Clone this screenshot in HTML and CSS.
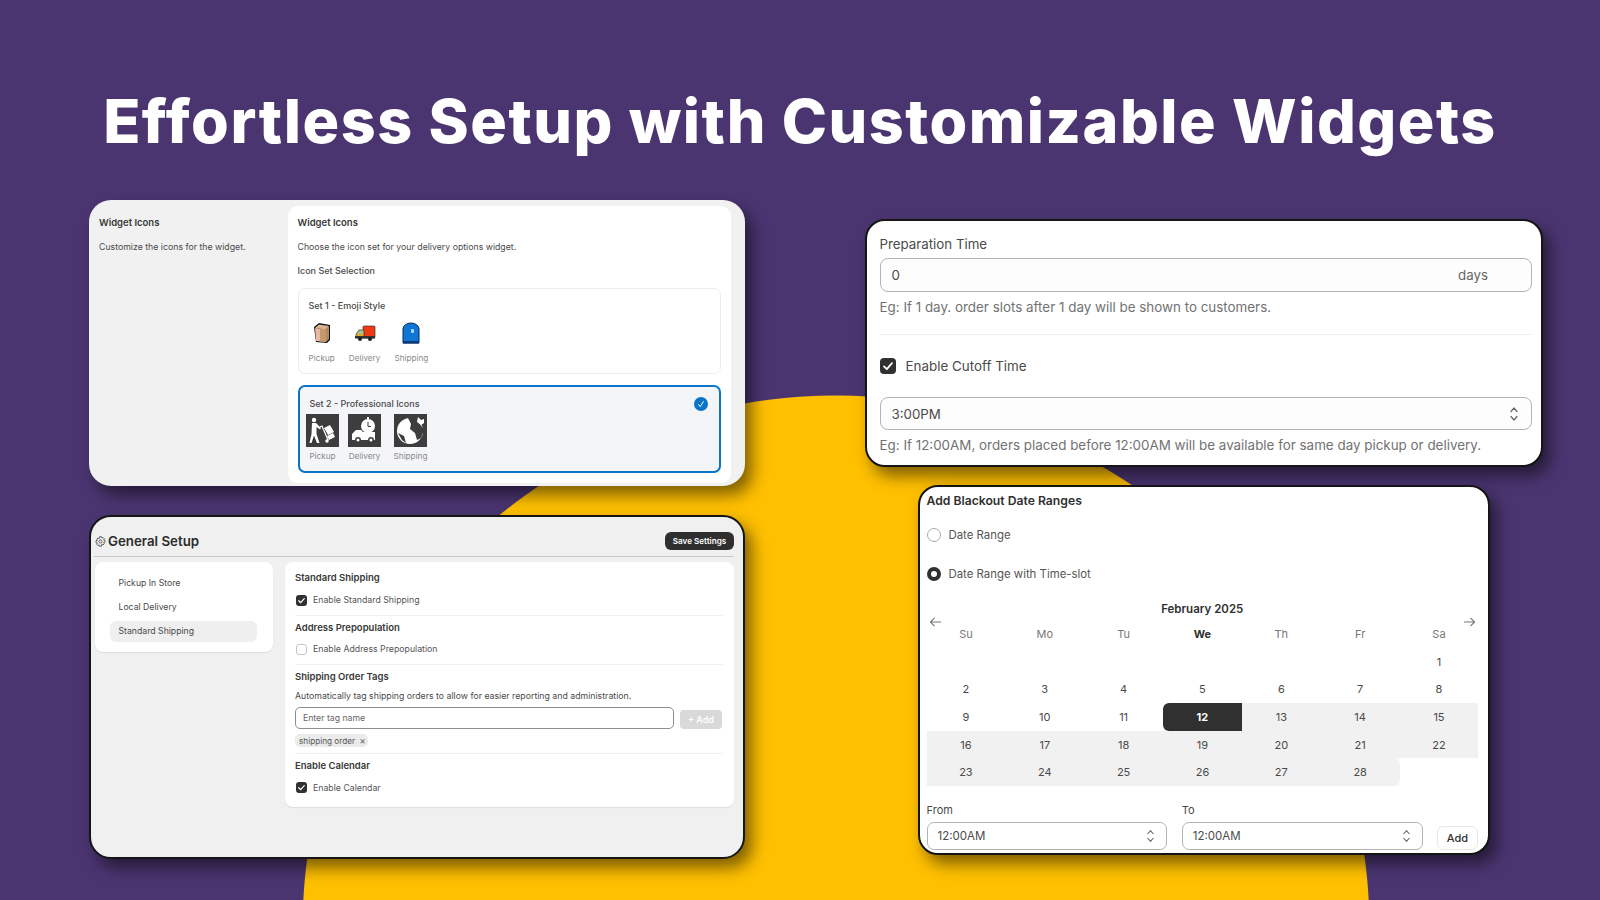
FILE: index.html
```html
<!DOCTYPE html>
<html lang="en">
<head>
<meta charset="utf-8">
<title>Effortless Setup with Customizable Widgets</title>
<link rel="stylesheet" href="styles.css">
</head>
<body>
<svg class="defs" width="0" height="0" aria-hidden="true">
  <symbol id="tick" viewBox="0 0 16 16"><path d="M4 8.4l2.8 2.8L12 5.2" fill="none" stroke="#fff" stroke-width="1.8" stroke-linecap="round" stroke-linejoin="round"/></symbol>
  <symbol id="updown" viewBox="0 0 10 18"><path d="M2 6.5L5 3l3 3.5M2 11.5L5 15l3-3.5" fill="none" stroke="#666" stroke-width="1.2" stroke-linecap="round" stroke-linejoin="round"/></symbol>
</svg>
<main class="page">
  <h1 class="headline">Effortless Setup with Customizable Widgets</h1>
  <div class="board">
    <div class="col col-left">
      <section class="card card-icons">
        <aside class="icons-side">
          <h3 class="t-strong">Widget Icons</h3>
          <p class="t-small side-desc">Customize the icons for the widget.</p>
        </aside>
        <div class="icons-panel">
          <h3 class="t-strong">Widget Icons</h3>
          <p class="t-small side-desc">Choose the icon set for your delivery options widget.</p>
          <p class="t-med set-label">Icon Set Selection</p>
          <div class="set set-one">
            <p class="t-med">Set 1 - Emoji Style</p>
            <div class="set-row">
              <div class="set-item">
                <svg class="emoji" viewBox="0 0 22 22"><path d="M3 5l5-4 11 2 0 15-3 3-11-1z" fill="#111"/><path d="M4 6l4-3.6L18 4l-3 3.6z" fill="#d9b48e"/><path d="M4 6l11 1.6L15 20 5 19z" fill="#e9b9a2"/><path d="M15 7.6L18 4v13l-3 3z" fill="#b08a62"/><path d="M9 7l6 .6V20l-6-.6z" fill="#c49a6c"/></svg>
                <span class="t-label">Pickup</span>
              </div>
              <div class="set-item">
                <svg class="emoji" viewBox="0 0 22 22"><rect x="9" y="4" width="12" height="12" rx="1" fill="#ef3a16" stroke="#222" stroke-width=".6"/><path d="M2 15v-3l3-4h5v8H3z" fill="#e3a92c" stroke="#222" stroke-width=".6"/><path d="M4 11.500l1.600-2.500H9v2.500z" fill="#7fd0c8"/><rect x="1" y="14" width="20" height="2.500" fill="#333"/><circle cx="6" cy="17" r="2" fill="#222"/><circle cx="16" cy="17" r="2" fill="#222"/></svg>
                <span class="t-label">Delivery</span>
              </div>
              <div class="set-item">
                <svg class="emoji" viewBox="0 0 22 22"><path d="M3 21V7a8 6 0 0 1 16 0v14z" fill="#0f76d6" stroke="#0a2a55" stroke-width="1"/><rect x="3" y="19" width="16" height="2.500" fill="#0a3d7e"/><rect x="11" y="7" width="3" height="4" rx="1" fill="#a9d6f5"/></svg>
                <span class="t-label">Shipping</span>
              </div>
            </div>
          </div>
          <div class="set set-two">
            <p class="t-med">Set 2 - Professional Icons</p>
            <svg class="set-badge" viewBox="0 0 14 14"><circle cx="7" cy="7" r="7" fill="#0a74c9"/><path d="M4.300 7.300L6.200 9.600 9.600 4.300" fill="none" stroke="#fff" stroke-width="1"/></svg>
            <div class="pro-row">
              <div class="pro-item">
                <svg class="pro" viewBox="0 0 33 33"><rect width="33" height="33" fill="#3d3d3d"/><circle cx="8" cy="6" r="2.200" fill="#fff"/><path d="M6 9h4l5 5-1 1.500-3.500-2.500V20l3 9h-2.500L8 21.500 5.500 29H3.500l2-9z" fill="#fff"/><path d="M14 13l2-1 6 14" fill="none" stroke="#fff" stroke-width="1.200"/><path d="M18 14l6-3 4 7-6 3z" fill="#fff"/><path d="M21 22l6-3 2 4-6 3z" fill="#fff"/><circle cx="21" cy="27" r="1.800" fill="#fff"/></svg>
                <span class="t-label">Pickup</span>
              </div>
              <div class="pro-item">
                <svg class="pro" viewBox="0 0 33 33"><rect width="33" height="33" fill="#3d3d3d"/><circle cx="20" cy="12" r="7" fill="#fff"/><rect x="19" y="3" width="2" height="2.500" fill="#fff"/><path d="M20 8v4.500h3" fill="none" stroke="#3d3d3d" stroke-width="1"/><path d="M4 24v-4l4-4h5l2 2h12v8H4z" fill="#fff"/><circle cx="10" cy="26" r="3" fill="#3d3d3d"/><circle cx="10" cy="26" r="1.500" fill="#fff"/><circle cx="23" cy="26" r="3" fill="#3d3d3d"/><circle cx="23" cy="26" r="1.500" fill="#fff"/></svg>
                <span class="t-label">Delivery</span>
              </div>
              <div class="pro-item">
                <svg class="pro" viewBox="0 0 33 33"><rect width="33" height="33" fill="#3d3d3d"/><circle cx="16" cy="17" r="13" fill="#fff"/><path d="M14 4l3 6-1 5 5 4 2 7 4-2 3-8-4-6 2-4-6-3zM4 19l6 3 2 7-4-3z" fill="#3d3d3d"/><path d="M24 3l3 3 3-1 0 4-3 2-4-3z" fill="#fff"/></svg>
                <span class="t-label">Shipping</span>
              </div>
            </div>
          </div>
        </div>
      </section>

      <section class="card card-dark card-setup">
        <header class="setup-head">
          <h2 class="setup-title">
            <svg class="gear" viewBox="0 0 12 12"><path d="M5 .8h2l.4 1.500 1.400-.7 1.300 1.300-.7 1.400 1.500.4v2l-1.500.4.700 1.400-1.300 1.300-1.400-.7L7 11.200H5l-.4-1.500-1.400.7-1.300-1.300.7-1.400-1.500-.4v-2l1.500-.4-.7-1.400 1.300-1.300 1.400.7z" fill="none" stroke="#555" stroke-width="1"/><circle cx="6" cy="6" r="1.700" fill="none" stroke="#555" stroke-width="1"/></svg>
            General Setup
          </h2>
          <button class="save-btn" type="button">Save Settings</button>
        </header>
        <div class="setup-body">
          <nav class="setup-nav">
            <a class="nav-item">Pickup In Store</a>
            <a class="nav-item">Local Delivery</a>
            <a class="nav-item nav-active">Standard Shipping</a>
          </nav>
          <div class="setup-main">
            <div class="sec sec-a">
              <h4 class="t-strong">Standard Shipping</h4>
              <label class="check-row row-a"><span class="cb cb-on"><svg viewBox="0 0 16 16"><use href="#tick"/></svg></span>Enable Standard Shipping</label>
            </div>
            <div class="sec sec-b">
              <h4 class="t-strong">Address Prepopulation</h4>
              <label class="check-row row-b"><span class="cb"></span>Enable Address Prepopulation</label>
            </div>
            <div class="sec sec-c">
              <h4 class="t-strong">Shipping Order Tags</h4>
              <p class="t-small tag-desc">Automatically tag shipping orders to allow for easier reporting and administration.</p>
              <div class="tag-input-row">
                <div class="tag-input">Enter tag name</div>
                <button class="tag-add" type="button">+ Add</button>
              </div>
              <span class="tag">shipping order <span class="tag-x">×</span></span>
            </div>
            <div class="sec sec-d">
              <h4 class="t-strong">Enable Calendar</h4>
              <label class="check-row row-a"><span class="cb cb-on"><svg viewBox="0 0 16 16"><use href="#tick"/></svg></span>Enable Calendar</label>
            </div>
          </div>
        </div>
      </section>
    </div>

    <div class="col col-right">
      <section class="card card-dark card-prep">
        <label class="prep-label">Preparation Time</label>
        <div class="field field-prep"><span>0</span><span class="field-unit">days</span></div>
        <p class="prep-help help-a">Eg: If 1 day. order slots after 1 day will be shown to customers.</p>
        <hr class="prep-rule">
        <label class="cutoff-row"><span class="cb cb-big"><svg viewBox="0 0 16 16"><use href="#tick"/></svg></span>Enable Cutoff Time</label>
        <div class="field field-cut"><span>3:00PM</span><svg class="updown-big" viewBox="0 0 10 18"><use href="#updown"/></svg></div>
        <p class="prep-help help-b">Eg: If 12:00AM, orders placed before 12:00AM will be available for same day pickup or delivery.</p>
      </section>

      <section class="card card-dark card-cal">
        <h3 class="cal-title">Add Blackout Date Ranges</h3>
        <label class="radio-row radio-first"><span class="radio"></span>Date Range</label>
        <label class="radio-row radio-second"><span class="radio radio-on"></span>Date Range with Time-slot</label>
        <div class="cal-month">February 2025</div>
        <div class="cal-nav">
          <svg viewBox="0 0 14 12"><path d="M13 6H1.500M6 1.500L1.500 6 6 10.500" fill="none" stroke="#777" stroke-width="1.200"/></svg>
          <svg viewBox="0 0 14 12"><path d="M1 6h11.500M8 1.500L12.500 6 8 10.500" fill="none" stroke="#777" stroke-width="1.200"/></svg>
        </div>
        <div class="cal-week">
          <span>Su</span><span>Mo</span><span>Tu</span><span class="today-head">We</span><span>Th</span><span>Fr</span><span>Sa</span>
        </div>
        <div class="cal-grid">
          <span></span><span></span><span></span><span></span><span></span><span></span><span>1</span>
          <span>2</span><span>3</span><span>4</span><span>5</span><span>6</span><span>7</span><span>8</span>
          <span>9</span><span>10</span><span>11</span><span class="sel">12</span><span class="rng">13</span><span class="rng">14</span><span class="rng">15</span>
          <span class="rng">16</span><span class="rng">17</span><span class="rng">18</span><span class="rng">19</span><span class="rng">20</span><span class="rng">21</span><span class="rng">22</span>
          <span class="rng">23</span><span class="rng">24</span><span class="rng">25</span><span class="rng">26</span><span class="rng">27</span><span class="rng rng-end">28</span><span></span>
        </div>
        <div class="time-row">
          <div class="time-field">
            <label class="time-label">From</label>
            <div class="time-select"><span>12:00AM</span><svg viewBox="0 0 10 18"><use href="#updown"/></svg></div>
          </div>
          <div class="time-field">
            <label class="time-label">To</label>
            <div class="time-select"><span>12:00AM</span><svg viewBox="0 0 10 18"><use href="#updown"/></svg></div>
          </div>
          <button class="time-add" type="button">Add</button>
        </div>
      </section>
    </div>
  </div>
</main>
</body>
</html>
```
FILE: styles.css
```css
* { box-sizing: border-box; }
html, body { margin: 0; padding: 0; }
body {
  width: 1600px;
  height: 900px;
  overflow: hidden;
  font-family: Inter, "Liberation Sans", sans-serif;
  color: #303030;
  background-color: #4b3571;
  background-image: radial-gradient(circle 534px at 836px 929px, #ffc000 99.8%, transparent 100%);
}
h1, h2, h3, h4, p { margin: 0; font-weight: 400; }
.defs { display: block; height: 0; }
.page { width: 1600px; height: 900px; }

.headline {
  height: 200px;
  padding-top: 84px;
  text-align: center;
  font-family: Inter, "Liberation Sans", sans-serif;
  font-weight: 800;
  font-size: 61px;
  line-height: 74px;
  letter-spacing: 1.500px;
  color: #fff;
  white-space: nowrap;
}

.board { display: flex; align-items: flex-start; padding-left: 89px; gap: 120px; }
.col { display: flex; flex-direction: column; }
.col-left { width: 656px; gap: 29px; }
.col-right { width: 678px; padding-top: 19px; gap: 18px; align-items: center; }

.card { box-shadow: 7px 9px 16px rgba(0, 0, 0, .5); }
.card-dark { border: 2px solid #151515; }

.t-strong { font-size: 9.500px; line-height: 12px; font-weight: 600; color: #383838; }
.t-small { font-size: 8.750px; line-height: 12px; color: #4a4a4a; }
.t-med { font-size: 9px; line-height: 12px; font-weight: 500; color: #4a4a4a; }
.t-label { font-size: 8.200px; line-height: 12px; color: #8a8a8a; }

/* Widget icons card */
.card-icons {
  display: flex;
  height: 286px;
  padding: 6px 14.500px 3px 0;
  border-radius: 22px;
  background: #f1f1f1;
}
.icons-side { width: 199px; padding: 11px 0 0 10px; }
.side-desc { margin-top: 12px; }
.icons-panel {
  flex: 1;
  padding: 11px 10px 0;
  border-radius: 10px;
  background: #fff;
}
.set-label { margin-top: 12px; }
.set { width: 423px; border-radius: 7px; }
.set-one {
  height: 86px;
  margin-top: 11px;
  padding: 11px 10px 0;
  border: 1px solid #ececec;
}
.set-row { display: flex; gap: 14px; margin-top: 10px; }
.set-item { display: flex; flex-direction: column; align-items: center; }
.emoji { width: 22px; height: 22px; margin-bottom: 8px; }
.set-two {
  position: relative;
  height: 88px;
  margin-top: 11px;
  padding: 11px 10px 0;
  border: 2px solid #0a74c9;
  background: #f4f5f8;
}
.set-badge { position: absolute; top: 10px; right: 11px; width: 14px; height: 14px; }
.pro-row { display: flex; gap: 9px; margin: 4px 0 0 -3.500px; }
.pro-item { display: flex; flex-direction: column; align-items: center; width: 33px; }
.pro-item:last-child { margin-left: 4px; }
.pro { width: 33px; height: 33px; margin-bottom: 2.500px; }

/* General setup card */
.card-setup {
  height: 344px;
  border-radius: 22px;
  background: #f0f0f0;
}
.setup-head {
  display: flex;
  align-items: center;
  justify-content: space-between;
  margin: 0 9px 0 3px;
  padding: 15px 0 6px 1px;
  border-bottom: 1.500px solid #c9c9c9;
}
.setup-title {
  display: flex;
  align-items: center;
  gap: 2px;
  font-size: 13.300px;
  line-height: 18px;
  font-weight: 600;
  color: #2c2c2c;
}
.gear { width: 11px; height: 11px; }
.save-btn {
  width: 69px;
  height: 18px;
  padding: 0;
  border: 0;
  border-radius: 6px;
  background: #2f2f2f;
  color: #fff;
  font: 600 8.100px/18px Inter, sans-serif;
}
.setup-body { display: flex; gap: 12.500px; padding: 5px 9px 0 3.500px; }
.setup-nav {
  display: flex;
  flex-direction: column;
  gap: 3px;
  width: 178px;
  height: 90px;
  padding: 10.500px 15.500px 0;
  border-radius: 8px;
  background: #fff;
  box-shadow: 0 1px 1px rgba(0, 0, 0, .08);
}
.nav-item {
  height: 21px;
  padding-left: 8.500px;
  border-radius: 6px;
  font-size: 8.700px;
  line-height: 21px;
  color: #4a4a4a;
}
.nav-active { background: #efefef; }
.setup-main {
  flex: 1;
  height: 245px;
  padding: 0 11px 0 10px;
  border-radius: 8px;
  background: #fff;
  box-shadow: 0 1px 1px rgba(0, 0, 0, .08);
}
.sec { border-bottom: 1px solid #f1f1f1; }
.sec-a { padding: 10px 0 9px; }
.sec-b { padding: 5.500px 0 9px; }
.sec-c { padding: 6px 0 5.500px; }
.sec-d { padding: 6px 0 0; border-bottom: 0; }
.check-row {
  display: flex;
  align-items: center;
  gap: 6px;
  padding-left: 1px;
  font-size: 8.750px;
  line-height: 12px;
  color: #555;
}
.row-a { margin-top: 10px; }
.row-b { margin-top: 9.500px; }
.cb {
  display: block;
  width: 11px;
  height: 11px;
  border: 1px solid #c4c4c4;
  border-radius: 3px;
  background: #fff;
}
.cb svg { display: block; width: 100%; height: 100%; }
.cb-on { border: 0; background: #303030; }
.tag-desc { margin-top: 6.500px; }
.tag-input-row { display: flex; align-items: flex-end; gap: 6px; margin-top: 5.500px; }
.tag-input {
  width: 379px;
  height: 22px;
  padding-left: 7px;
  border: 1px solid #8e8e8e;
  border-radius: 5px;
  font-size: 8.700px;
  line-height: 20px;
  color: #666;
}
.tag-add {
  width: 42px;
  height: 19px;
  padding: 0;
  border: 0;
  border-radius: 4px;
  background: #d9d9d9;
  color: #fff;
  font: 600 9px/19px Inter, sans-serif;
}
.tag {
  display: block;
  width: 73px;
  height: 13px;
  margin-top: 5px;
  padding-left: 4px;
  border-radius: 5px;
  background: #ebebeb;
  font-size: 8.200px;
  line-height: 13px;
  color: #555;
  white-space: nowrap;
}
.tag-x { margin-left: 2px; font-size: 10px; color: #666; }

/* Preparation card */
.card-prep {
  width: 678px;
  height: 248px;
  padding: 15px 9px 0 12.500px;
  border-radius: 20px;
  background: #fff;
}
.prep-label { display: block; font-size: 13.300px; line-height: 16px; color: #4a4a4a; }
.field {
  display: flex;
  align-items: center;
  justify-content: space-between;
  padding: 0 12px 0 11px;
  border: 1.500px solid #b3b3b3;
  border-radius: 8px;
  background: #fdfdfd;
  font-size: 13.300px;
  color: #4a4a4a;
}
.field-prep { height: 34px; margin-top: 6px; }
.field-unit { width: 31px; margin-right: 30px; color: #666; }
.prep-help { font-size: 13.400px; line-height: 16px; color: #727272; white-space: nowrap; }
.help-a { margin-top: 7px; }
.prep-rule { height: 1px; margin: 19px 0 0; border: 0; background: #eee; }
.cutoff-row {
  display: flex;
  align-items: center;
  gap: 10px;
  margin-top: 23px;
  font-size: 13.400px;
  line-height: 16px;
  color: #4a4a4a;
}
.cb-big {
  width: 16px;
  height: 16px;
  border: 0;
  border-radius: 4px;
  background: #303030;
}
.field-cut { height: 33px; margin-top: 23px; }
.updown-big { width: 10px; height: 18px; }
.help-b { margin-top: 7px; }

/* Calendar card */
.card-cal {
  width: 572px;
  height: 370px;
  padding: 7px 10px 0 6.500px;
  border-radius: 20px;
  background: #fff;
}
.cal-title { font-size: 12.200px; line-height: 14px; font-weight: 600; color: #303030; }
.radio-row {
  display: flex;
  align-items: center;
  gap: 8px;
  font-size: 11.400px;
  line-height: 14px;
  color: #555;
}
.radio-first { margin-top: 20px; }
.radio-second { margin-top: 24.700px; }
.radio {
  display: block;
  width: 14px;
  height: 14px;
  border: 1px solid #aaa;
  border-radius: 50%;
}
.radio-on { border: 4px solid #303030; }
.cal-month {
  margin-top: 21px;
  text-align: center;
  font-size: 11.500px;
  line-height: 14px;
  font-weight: 600;
  color: #303030;
}
.cal-nav { display: flex; justify-content: space-between; height: 13px; padding: 0 2px; }
.cal-nav svg { width: 13px; height: 12px; }
.cal-week {
  display: grid;
  grid-template-columns: repeat(7, 78.850px);
  margin-top: -2px;
  text-align: center;
  font-size: 11px;
  line-height: 14px;
  color: #777;
}
.today-head { font-weight: 700; color: #303030; }
.cal-grid {
  display: grid;
  grid-template-columns: repeat(7, 78.850px);
  grid-auto-rows: 27.700px;
  margin-top: 7px;
  font-size: 11px;
  color: #4a4a4a;
}
.cal-grid span { display: flex; align-items: center; justify-content: center; }
.rng { background: #f1f1f1; }
.rng-end { border-radius: 0 6px 6px 0; }
.sel {
  border-radius: 6px 0 0 6px;
  background: #303030;
  color: #fff;
  font-weight: 700;
}
.time-row { display: flex; align-items: flex-end; gap: 14.500px; margin-top: 17px; }
.time-field { width: 241px; }
.time-label { display: block; font-size: 11px; line-height: 14px; color: #4a4a4a; }
.time-select {
  display: flex;
  align-items: center;
  justify-content: space-between;
  height: 27.500px;
  margin-top: 5px;
  padding: 0 11px 0 10px;
  border: 1.500px solid #b3b3b3;
  border-radius: 7px;
  font-size: 11.500px;
  color: #4a4a4a;
}
.time-select svg { width: 9px; height: 16px; }
.time-add {
  width: 41px;
  height: 24px;
  padding: 0;
  border: 1px solid #e8e8e8;
  border-radius: 6px;
  background: #fff;
  color: #303030;
  font: 500 11px/22px Inter, sans-serif;
}
```
